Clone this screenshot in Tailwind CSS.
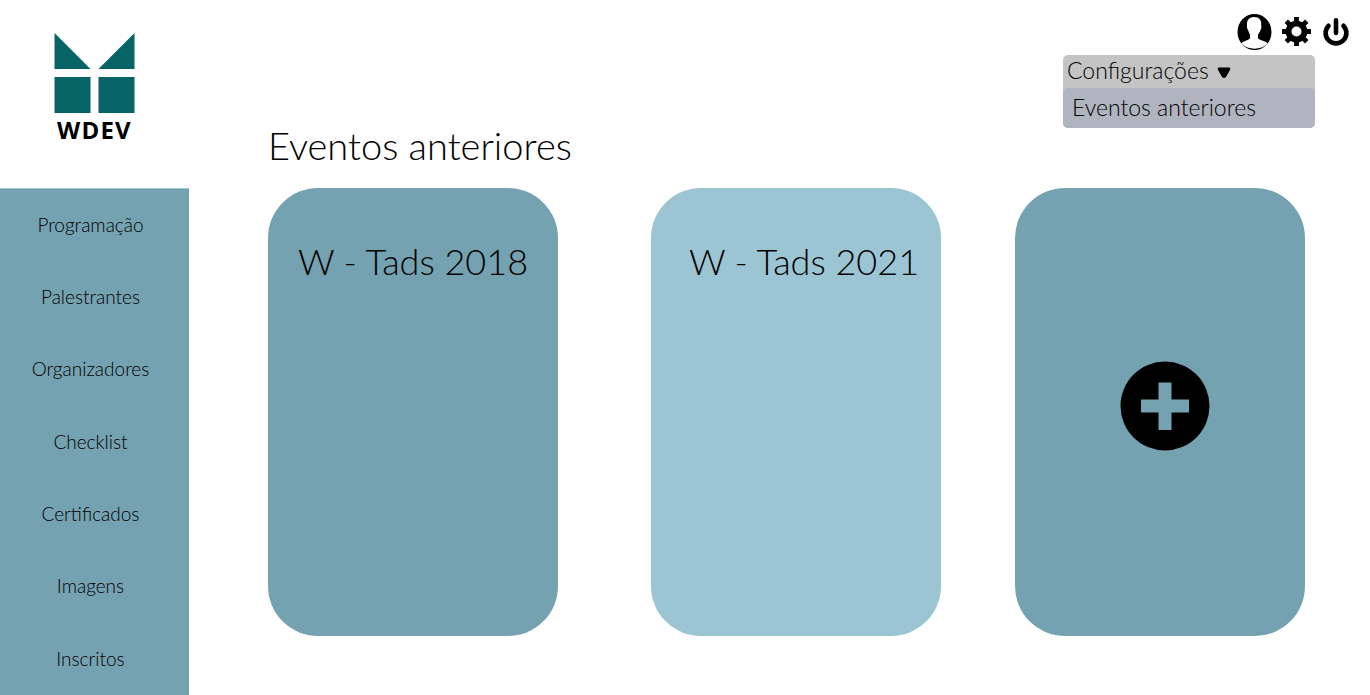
<!DOCTYPE html>
<html lang="pt-BR">
<head>
<meta charset="utf-8">
<meta name="viewport" content="width=device-width, initial-scale=1">
<title>WDEV - Eventos anteriores</title>
<script src="https://cdn.jsdelivr.net/npm/@tailwindcss/browser@4"></script>
</head>
<body class="flex min-h-screen bg-white font-['Lato',sans-serif] font-light text-black">
  <aside class="flex w-[189px] shrink-0 flex-col">
    <a href="#" aria-label="WDEV" class="flex h-[188px] flex-col items-center pt-[33px]">
      <svg class="h-20 w-[81px]" viewBox="0 0 81 80" fill="#066467" aria-hidden="true">
        <path d="M0.5 0V36H36.5ZM80.5 0V36H44.5ZM0.5 44H36.5V80H0.5ZM44.5 44H80.5V80H44.5Z"/>
      </svg>
      <span class="mt-1 font-['Open_Sans',sans-serif] text-2xl leading-[26px] font-bold tracking-wider">WDEV</span>
    </a>
    <nav class="flex flex-1 flex-col border-t border-[#9bc5d3] bg-[#75a2b1] pr-2 text-[19px]">
      <a href="#" class="flex flex-1 items-center justify-center">Programação</a>
      <a href="#" class="flex flex-1 items-center justify-center">Palestrantes</a>
      <a href="#" class="flex flex-1 items-center justify-center">Organizadores</a>
      <a href="#" class="flex flex-1 items-center justify-center">Checklist</a>
      <a href="#" class="flex flex-1 items-center justify-center">Certificados</a>
      <a href="#" class="flex flex-1 items-center justify-center">Imagens</a>
      <a href="#" class="flex flex-1 items-center justify-center">Inscritos</a>
    </nav>
  </aside>
  <div class="flex min-w-0 flex-1 flex-col">
    <header class="flex flex-col items-end">
      <div class="flex h-[55px] items-center pt-2 pr-[21px]">
        <button type="button" aria-label="Perfil" class="mr-[10px]">
          <svg class="h-9 w-[35px]" viewBox="0 0 35 36" aria-hidden="true">
            <ellipse cx="17.5" cy="18" rx="17" ry="18"/>
            <path fill="#fff" d="M17 3C12 3 9.500 6.500 10 11.500Q9.500 14 11 16Q12 19 13 20.500V24C13 26 6 27 4.200 29.500Q10 34.700 17.500 34.700T30.800 29.500C29 27 21 26 21 24V20.500Q23 18 23.500 16Q25 14 24.200 11.500C25 6 22 3 17 3Z"/>
          </svg>
        </button>
        <button type="button" aria-label="Ajustes" class="mr-3">
          <svg class="size-[29px]" viewBox="0 0 30 30" aria-hidden="true">
            <path d="M12.500 0H17.500V5H12.500ZM12.500 25H17.500V30H12.500ZM0 12.500H5V17.500H0ZM25 12.500H30V17.500H25Z"/>
            <path transform="rotate(45 15 15)" d="M12.500 0H17.500V5H12.500ZM12.500 25H17.500V30H12.500ZM0 12.500H5V17.500H0ZM25 12.500H30V17.500H25Z"/>
            <circle cx="15" cy="15" r="8.200" fill="none" stroke="#000" stroke-width="6"/>
          </svg>
        </button>
        <button type="button" aria-label="Sair">
          <svg class="h-7 w-[26px]" viewBox="0 0 26 28" fill="none" stroke="#000" stroke-width="4.600" stroke-linecap="round" aria-hidden="true">
            <path d="M13 2.300V15M5.500 7.800A10.400 10.400 0 1 0 20.500 7.800"/>
          </svg>
        </button>
      </div>
      <div class="mr-[55px] w-[252px] rounded-[5px] bg-[#c4c4c4] text-[23px]">
        <button type="button" aria-expanded="true" class="flex h-[33px] w-full items-center gap-2 pb-[2px] pl-1">
          Configurações
          <svg class="mt-1 h-3 w-[14px]" viewBox="0 0 14 12" aria-hidden="true"><path d="M2 0.500H12Q14 1 13 3L9 10Q7 12 5 10L1 3Q0 1 2 0.500Z"/></svg>
        </button>
        <a href="#" class="flex h-10 items-center rounded-[5px] bg-[#b0b4bf] pb-[2px] pl-[9px]">Eventos anteriores</a>
      </div>
    </header>
    <main class="flex flex-1 flex-col pr-[65px] pb-[59px] pl-[79px]">
      <h1 class="h-[60px] text-[38px] leading-[34px]">Eventos anteriores</h1>
      <div class="flex flex-1">
        <a href="#" class="w-[290px] rounded-[50px] bg-[#75a2b1] pt-12 text-center text-4xl leading-[50px]">W - Tads 2018</a>
        <a href="#" class="mr-[74px] ml-auto w-[290px] rounded-[50px] bg-[#9bc5d3] pt-12 pl-4 text-center text-4xl leading-[50px]">W - Tads 2021</a>
        <button type="button" aria-label="Adicionar evento" class="flex w-[290px] items-center justify-center rounded-[50px] bg-[#75a2b1] pl-[10px]">
          <svg class="mb-3 size-[90px]" viewBox="0 0 90 90" aria-hidden="true">
            <circle cx="45" cy="45" r="44.500"/>
            <path fill="#75a2b1" d="M38.500 21.500H51.500V38.500H69V51.500H51.500V69H38.500V51.500H21V38.500H38.500Z"/>
          </svg>
        </button>
      </div>
    </main>
  </div>
</body>
</html>
